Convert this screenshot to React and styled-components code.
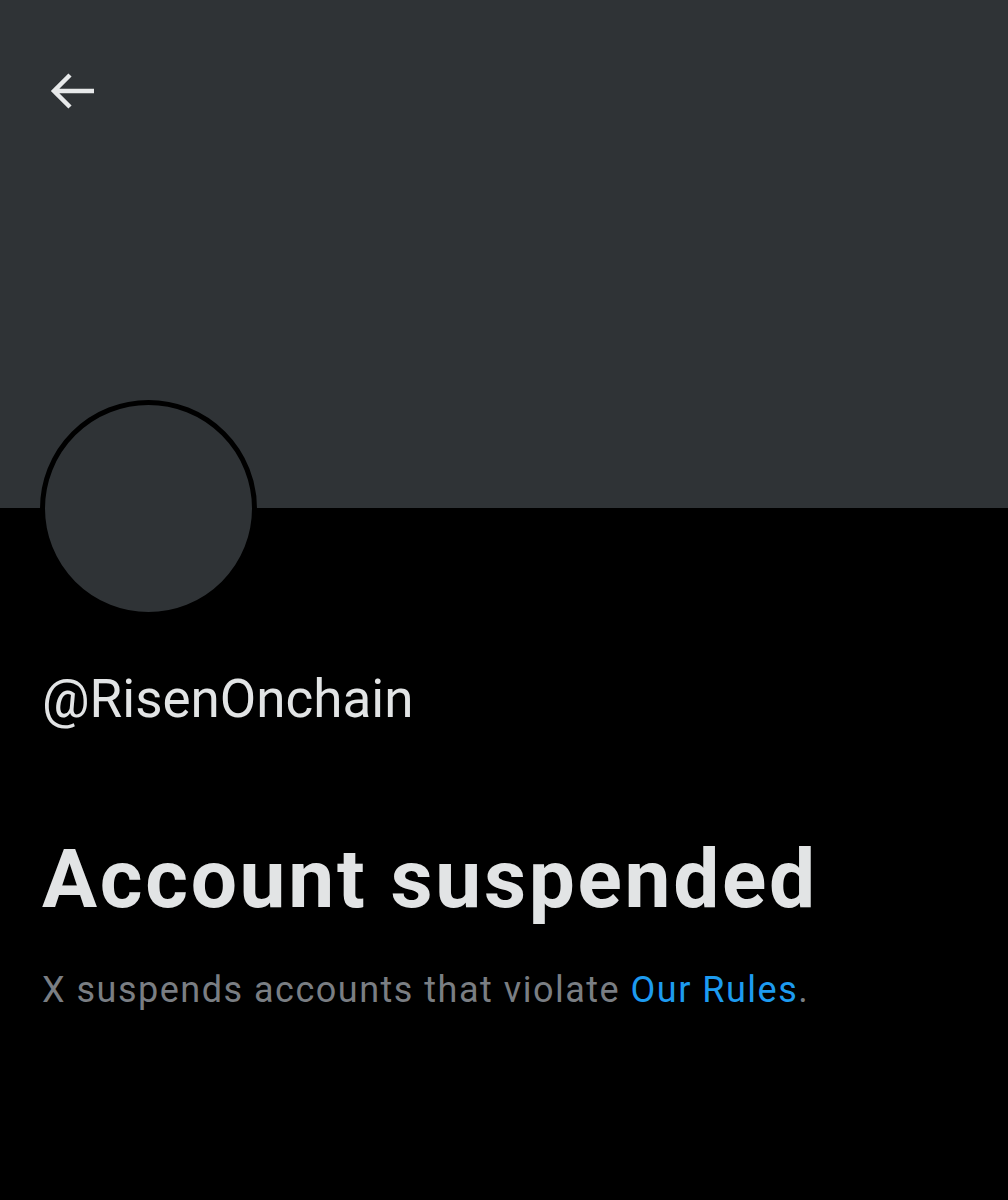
import React from "react";
import styled, { createGlobalStyle } from "styled-components";

const Global = createGlobalStyle`
  html, body {
    margin: 0;
    padding: 0;
    background: #000;
  }
  body {
    font-family: Roboto, "Liberation Sans", sans-serif;
  }
`;

const Page = styled.div`
  width: 1008px;
  min-height: 1200px;
  background: #000;
  color: #e7e9ea;
`;

const Banner = styled.header`
  height: 508px;
  background: #2f3336;
  padding: 68px 0 0 48px;
  box-sizing: border-box;
`;

const BackButton = styled.button`
  display: flex;
  align-items: center;
  justify-content: center;
  width: 50px;
  height: 46px;
  padding: 0;
  border: none;
  background: transparent;
  color: #e7e9ea;
  cursor: pointer;
`;

const Body = styled.main`
  padding: 0 42px;
`;

const Avatar = styled.div`
  width: 207px;
  height: 207px;
  margin: -108px 0 0 -2px;
  border-radius: 50%;
  border: 5px solid #000;
  background: #2f3336;
`;

const Handle = styled.div`
  margin-top: 54px;
  font-size: 53px;
  line-height: 56px;
  color: #e2e4e5;
`;

const Title = styled.h1`
  margin: 102px 0 0;
  font-size: 82px;
  font-weight: 700;
  line-height: 100px;
  letter-spacing: 2.7px;
  color: #e2e4e5;
`;

const Note = styled.p`
  margin: 37px 0 0;
  font-size: 36px;
  line-height: 48px;
  letter-spacing: 1.5px;
  color: #7a7e83;
`;

const RuleLink = styled.a`
  color: #1d9bf0;
  text-decoration: none;
`;

export default function App() {
  return (
    <Page>
      <Global />
      <Banner>
        <BackButton aria-label="Back">
          <svg width="48" height="40" viewBox="0 0 48 40" fill="none">
            <path
              d="M45 20H5M21 4L5 20l16 16"
              stroke="currentColor"
              strokeWidth="4.5"
              strokeLinecap="butt"
              strokeLinejoin="miter"
            />
          </svg>
        </BackButton>
      </Banner>
      <Body>
        <Avatar />
        <Handle>@RisenOnchain</Handle>
        <Title>Account suspended</Title>
        <Note>
          X suspends accounts that violate <RuleLink href="#">Our Rules</RuleLink>.
        </Note>
      </Body>
    </Page>
  );
}
